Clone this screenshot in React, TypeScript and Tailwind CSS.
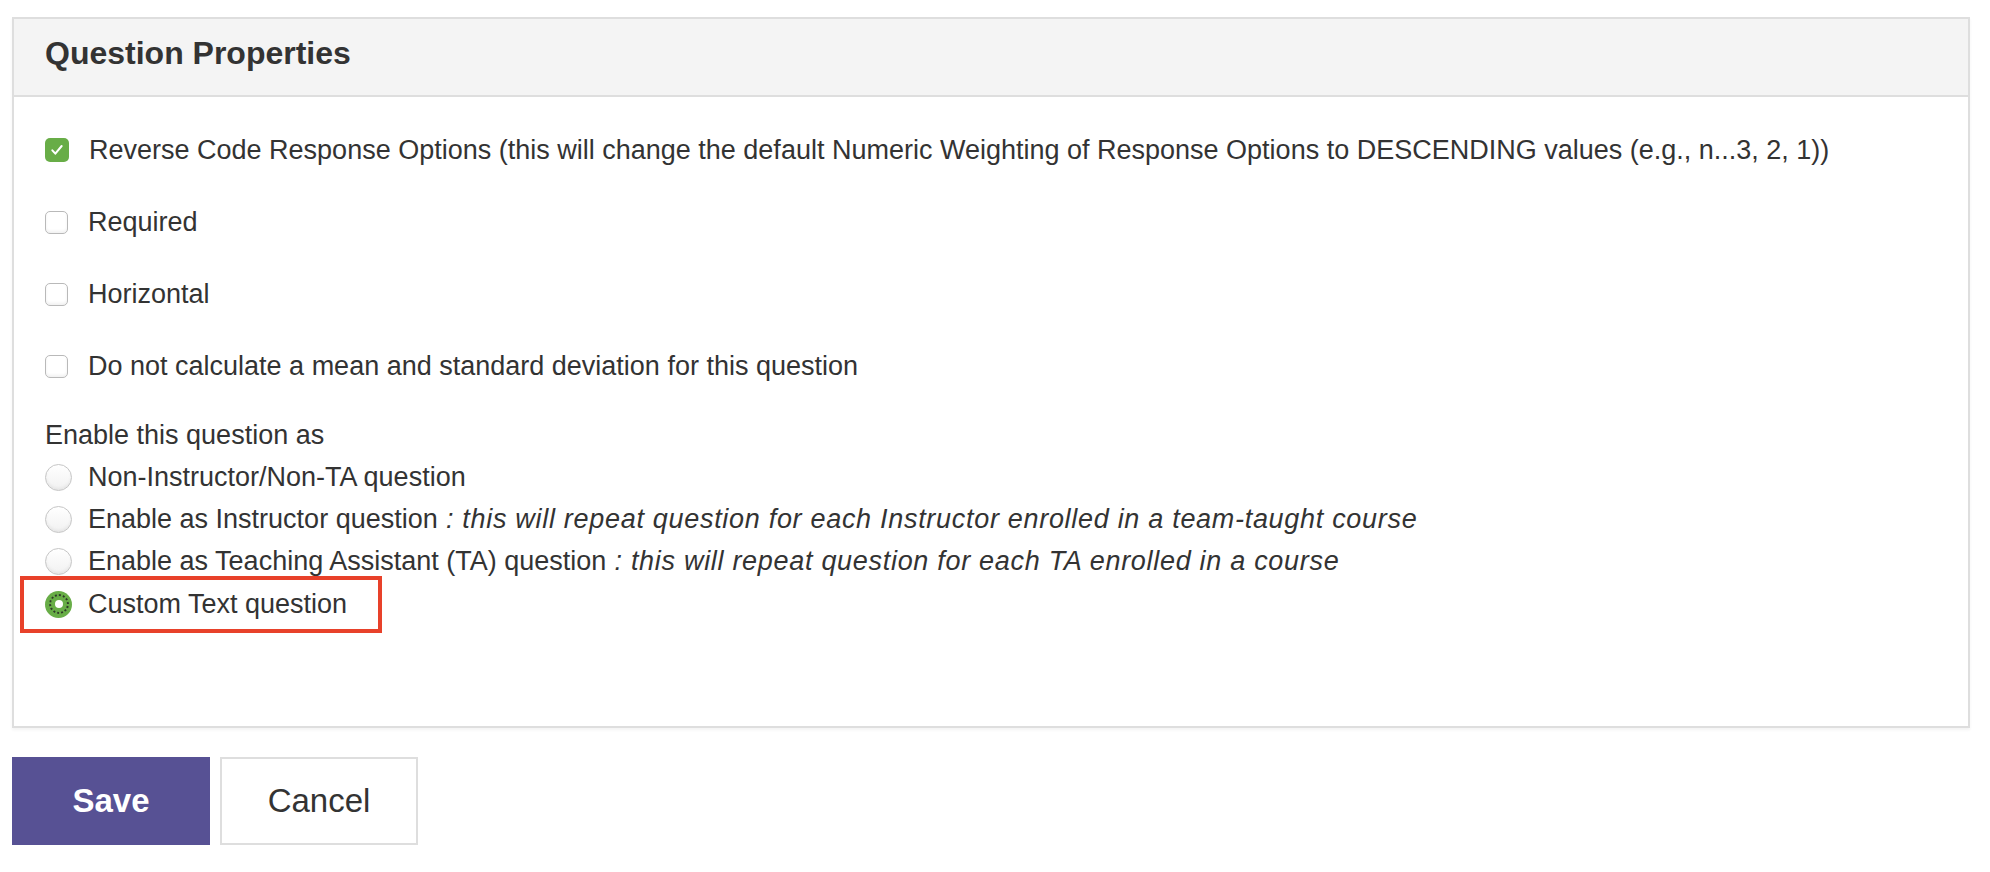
import React from 'react';

const font = { fontFamily: '"Liberation Sans", Arial, Helvetica, sans-serif' };

const CheckBox: React.FC<{ checked?: boolean }> = ({ checked }) =>
  checked ? (
    <span className="flex h-[24px] w-[24px] shrink-0 items-center justify-center rounded-[5px] bg-[#68ad47]">
      <svg viewBox="0 0 24 24" className="h-[16px] w-[16px]" fill="none" stroke="white" strokeWidth="3" strokeLinecap="round" strokeLinejoin="round">
        <path d="M5 12.5l4.5 5L19 6" />
      </svg>
    </span>
  ) : (
    <span className="h-[23px] w-[23px] shrink-0 rounded-[5px] border border-[#b9b9b9] bg-white shadow-[inset_0_-2px_3px_rgba(0,0,0,0.06)]" />
  );

const Radio: React.FC<{ checked?: boolean }> = ({ checked }) =>
  checked ? (
    <span className="flex h-[27px] w-[27px] shrink-0 items-center justify-center rounded-full bg-[#68ad47]">
      <span className="flex h-[20px] w-[20px] items-center justify-center rounded-full border-2 border-dotted border-[#2f3a2a]">
        <span className="h-[8px] w-[8px] rounded-full bg-white" />
      </span>
    </span>
  ) : (
    <span className="h-[27px] w-[27px] shrink-0 rounded-full border border-[#c6c6c6] bg-gradient-to-b from-white to-[#f1f1f1] shadow-[inset_0_-2px_3px_rgba(0,0,0,0.05)]" />
  );

const checks = [
  {
    label:
      'Reverse Code Response Options (this will change the default Numeric Weighting of Response Options to DESCENDING values (e.g., n...3, 2, 1))',
    checked: true,
  },
  { label: 'Required', checked: false },
  { label: 'Horizontal', checked: false },
  { label: 'Do not calculate a mean and standard deviation for this question', checked: false },
];

const radios = [
  { label: 'Non-Instructor/Non-TA question', note: '' },
  { label: 'Enable as Instructor question', note: ' : this will repeat question for each Instructor enrolled in a team-taught course' },
  { label: 'Enable as Teaching Assistant (TA) question', note: ' : this will repeat question for each TA enrolled in a course' },
];

export default function App() {
  return (
    <div className="min-h-screen bg-white pl-[12px] pr-[20px] pt-[17px] text-[#333333]" style={font}>
      {/* Panel */}
      <div className="border-2 border-[#dedede] bg-white shadow-[0_2px_3px_rgba(0,0,0,0.05)]">
        <div className="flex h-[78px] items-center border-b-2 border-[#dedede] bg-[#f4f4f4] pb-[8px] pl-[31px]">
          <h2 className="text-[32px] font-bold leading-none">Question Properties</h2>
        </div>

        <div className="pb-[100px] pl-[31px] pt-[17px]">
          {checks.map((c) => (
            <div key={c.label} className="flex h-[72px] items-center gap-[20px] text-[27px]">
              <CheckBox checked={c.checked} />
              <span>{c.label}</span>
            </div>
          ))}

          <div className="mt-[12px] flex h-[42px] items-center text-[27px]">Enable this question as</div>

          {radios.map((r) => (
            <div key={r.label} className="flex h-[42px] items-center gap-[16px] text-[27px]">
              <Radio />
              <span>
                {r.label}
                {r.note && <em className="tracking-[0.7px]">{r.note}</em>}
              </span>
            </div>
          ))}

          <div className="relative flex h-[44px] items-center gap-[16px] text-[27px]">
            <Radio checked />
            <span>Custom Text question</span>
            {/* highlight annotation */}
            <div className="pointer-events-none absolute left-[-25px] top-[-6px] h-[57px] w-[362px] border-4 border-[#e8412a]" />
          </div>
        </div>
      </div>

      {/* Actions */}
      <div className="flex gap-[10px] pt-[29px]">
        <button className="flex h-[88px] w-[198px] items-center justify-center bg-[#575194] text-[33px] font-bold text-white">
          Save
        </button>
        <button className="flex h-[88px] w-[198px] items-center justify-center border-2 border-[#dedede] bg-white text-[33px] text-[#333333]">
          Cancel
        </button>
      </div>
    </div>
  );
}
